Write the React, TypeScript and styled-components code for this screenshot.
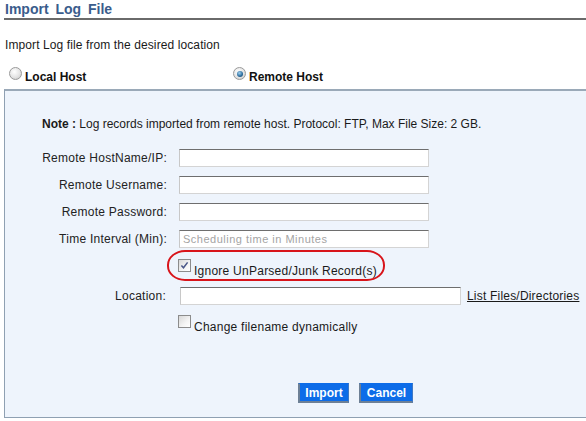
import React from 'react';
import styled, { createGlobalStyle } from 'styled-components';

const GlobalStyle = createGlobalStyle`
  html, body {
    margin: 0;
    padding: 0;
    background: #fff;
    font-family: "Liberation Sans", Arial, sans-serif;
    font-size: 12px;
    color: #1a1a1a;
  }
`;

const Page = styled.div`
  width: 586px;
  height: 421px;
  overflow: hidden;
`;

const Header = styled.div`
  margin-left: 4px;
  height: 18px;
  border-bottom: 2px solid #6a6a6a;
`;

const Title = styled.h1`
  margin: 0;
  padding-left: 1px;
  font-size: 14px;
  line-height: 18px;
  font-weight: bold;
  word-spacing: 3px;
  color: #3a5c8c;
`;

const Subtitle = styled.div`
  margin: 17px 0 0 5px;
  line-height: 16px;
  letter-spacing: 0.1px;
`;

const HostRow = styled.div`
  display: flex;
  margin: 15px 0 0 9px;
  height: 17px;
`;

const HostOption = styled.label<{ $width?: number }>`
  display: flex;
  align-items: center;
  gap: 3px;
  width: ${(p) => (p.$width ? `${p.$width}px` : 'auto')};
  font-weight: bold;
  color: #111;
`;

const RadioDot = styled.span<{ $checked?: boolean }>`
  position: relative;
  top: -3px;
  display: inline-block;
  width: 11px;
  height: 11px;
  border-radius: 50%;
  border: 1px solid #9a9a9a;
  background: radial-gradient(circle at 40% 35%, #ffffff 0%, #e4e4e4 55%, #c4c4c4 100%);
  &::after {
    content: '';
    display: ${(p) => (p.$checked ? 'block' : 'none')};
    position: absolute;
    left: 2.5px;
    top: 2.5px;
    width: 6px;
    height: 6px;
    border-radius: 50%;
    background: radial-gradient(circle at 40% 35%, #9fd0f0 0%, #2a6a9a 60%, #153c60 100%);
  }
`;

const Panel = styled.div`
  margin: 4px -6px 0 4px;
  border: 1px solid #8fa0b2;
  border-top-width: 2px;
  border-top-color: #9aa9b8;
  background: #eef4fc;
  padding: 25px 0 14px;
`;

const Note = styled.div`
  padding-left: 37px;
  line-height: 16px;
  color: #1a1a1a;
  b {
    font-weight: bold;
  }
`;

const Form = styled.div`
  display: grid;
  grid-template-columns: 162px auto;
  column-gap: 12px;
  row-gap: 9px;
  margin-top: 17px;
  align-items: center;
`;

const Label = styled.label<{ $inset?: number }>`
  text-align: right;
  padding-right: ${(p) => p.$inset ?? 0}px;
  line-height: 18px;
  letter-spacing: 0.25px;
  color: #222;
`;

const TextBox = styled.input<{ $width?: number; $shift?: number }>`
  box-sizing: border-box;
  width: ${(p) => p.$width ?? 250}px;
  height: 18px;
  margin-left: ${(p) => p.$shift ?? 0}px;
  border: 1px solid #d4d4d4;
  border-top-color: #6e6e6e;
  border-left-color: #c8c8c8;
  background: #fff;
  padding: 0 3px;
  font-family: "Liberation Sans", Arial, sans-serif;
  font-size: 11px;
  letter-spacing: 0.5px;
  &::placeholder {
    color: #a4a4a4;
  }
`;

const FieldLine = styled.div`
  display: flex;
  align-items: center;
  gap: 6px;
`;

const Link = styled.a`
  color: #1a1a1a;
  text-decoration: underline;
  letter-spacing: 0.2px;
  cursor: pointer;
`;

const CheckRow = styled.label<{ $marked?: boolean }>`
  position: relative;
  display: flex;
  align-items: flex-end;
  gap: 3px;
  height: 20px;
  margin-left: -1px;
  margin-top: ${(p) => (p.$marked ? 1 : 0)}px;
  color: #1a1a1a;
`;

const Box = styled.span`
  position: relative;
  top: -6px;
  width: 13px;
  height: 13px;
  box-sizing: border-box;
  border: 1px solid #8c8c8c;
  background: linear-gradient(135deg, #d8d8d8 0%, #f4f4f4 60%, #ffffff 100%);
  display: flex;
  align-items: center;
  justify-content: center;
`;

const CheckText = styled.span`
  line-height: 14px;
  letter-spacing: 0.25px;
`;

const Highlight = styled.span`
  position: absolute;
  left: -11px;
  top: -8px;
  width: 218px;
  height: 31px;
  box-sizing: border-box;
  border: 2px solid #d8141a;
  border-radius: 18px / 15px;
  pointer-events: none;
`;

const Actions = styled.div`
  display: flex;
  gap: 10px;
  margin-top: 40px;
  padding-left: 119px;
`;

const Button = styled.button<{ $width: number }>`
  width: ${(p) => p.$width}px;
  height: 20px;
  padding: 0;
  background: #0d6ce8;
  color: #fff;
  font-family: "Liberation Sans", Arial, sans-serif;
  font-size: 12px;
  font-weight: bold;
  border: none;
  border-left: 2px solid #6d8096;
  border-bottom: 2px solid #6d8096;
  border-right: 1px solid #3f78c4;
  border-top: 1px solid #0d6ce8;
  cursor: pointer;
`;

const Tick: React.FC = () => (
  <svg width="9" height="9" viewBox="0 0 9 9">
    <path d="M1.4 4.4 L3.5 6.8 L7.6 1.4" fill="none" stroke="#4a5788" strokeWidth="1.5" />
  </svg>
);

const App: React.FC = () => {
  return (
    <>
      <GlobalStyle />
      <Page>
        <Header>
          <Title>Import Log File</Title>
        </Header>
        <Subtitle>Import Log file from the desired location</Subtitle>
        <HostRow>
          <HostOption $width={224}>
            <RadioDot />
            Local Host
          </HostOption>
          <HostOption>
            <RadioDot $checked />
            Remote Host
          </HostOption>
        </HostRow>
        <Panel>
          <Note>
            <b>Note :</b> Log records imported from remote host. Protocol: FTP, Max File Size: 2 GB.
          </Note>
          <Form>
            <Label>Remote HostName/IP:</Label>
            <TextBox />
            <Label>Remote Username:</Label>
            <TextBox />
            <Label>Remote Password:</Label>
            <TextBox type="password" />
            <Label>Time Interval (Min):</Label>
            <TextBox placeholder="Scheduling time in Minutes" />

            <span />
            <CheckRow $marked>
              <Box>
                <Tick />
              </Box>
              <CheckText>Ignore UnParsed/Junk Record(s)</CheckText>
              <Highlight />
            </CheckRow>

            <Label $inset={1}>Location:</Label>
            <FieldLine>
              <TextBox $width={281} $shift={1} />
              <Link>List Files/Directories</Link>
            </FieldLine>

            <span />
            <CheckRow>
              <Box />
              <CheckText>Change filename dynamically</CheckText>
            </CheckRow>

            <span />
            <Actions>
              <Button $width={51}>Import</Button>
              <Button $width={54}>Cancel</Button>
            </Actions>
          </Form>
        </Panel>
      </Page>
    </>
  );
};

export default App;
